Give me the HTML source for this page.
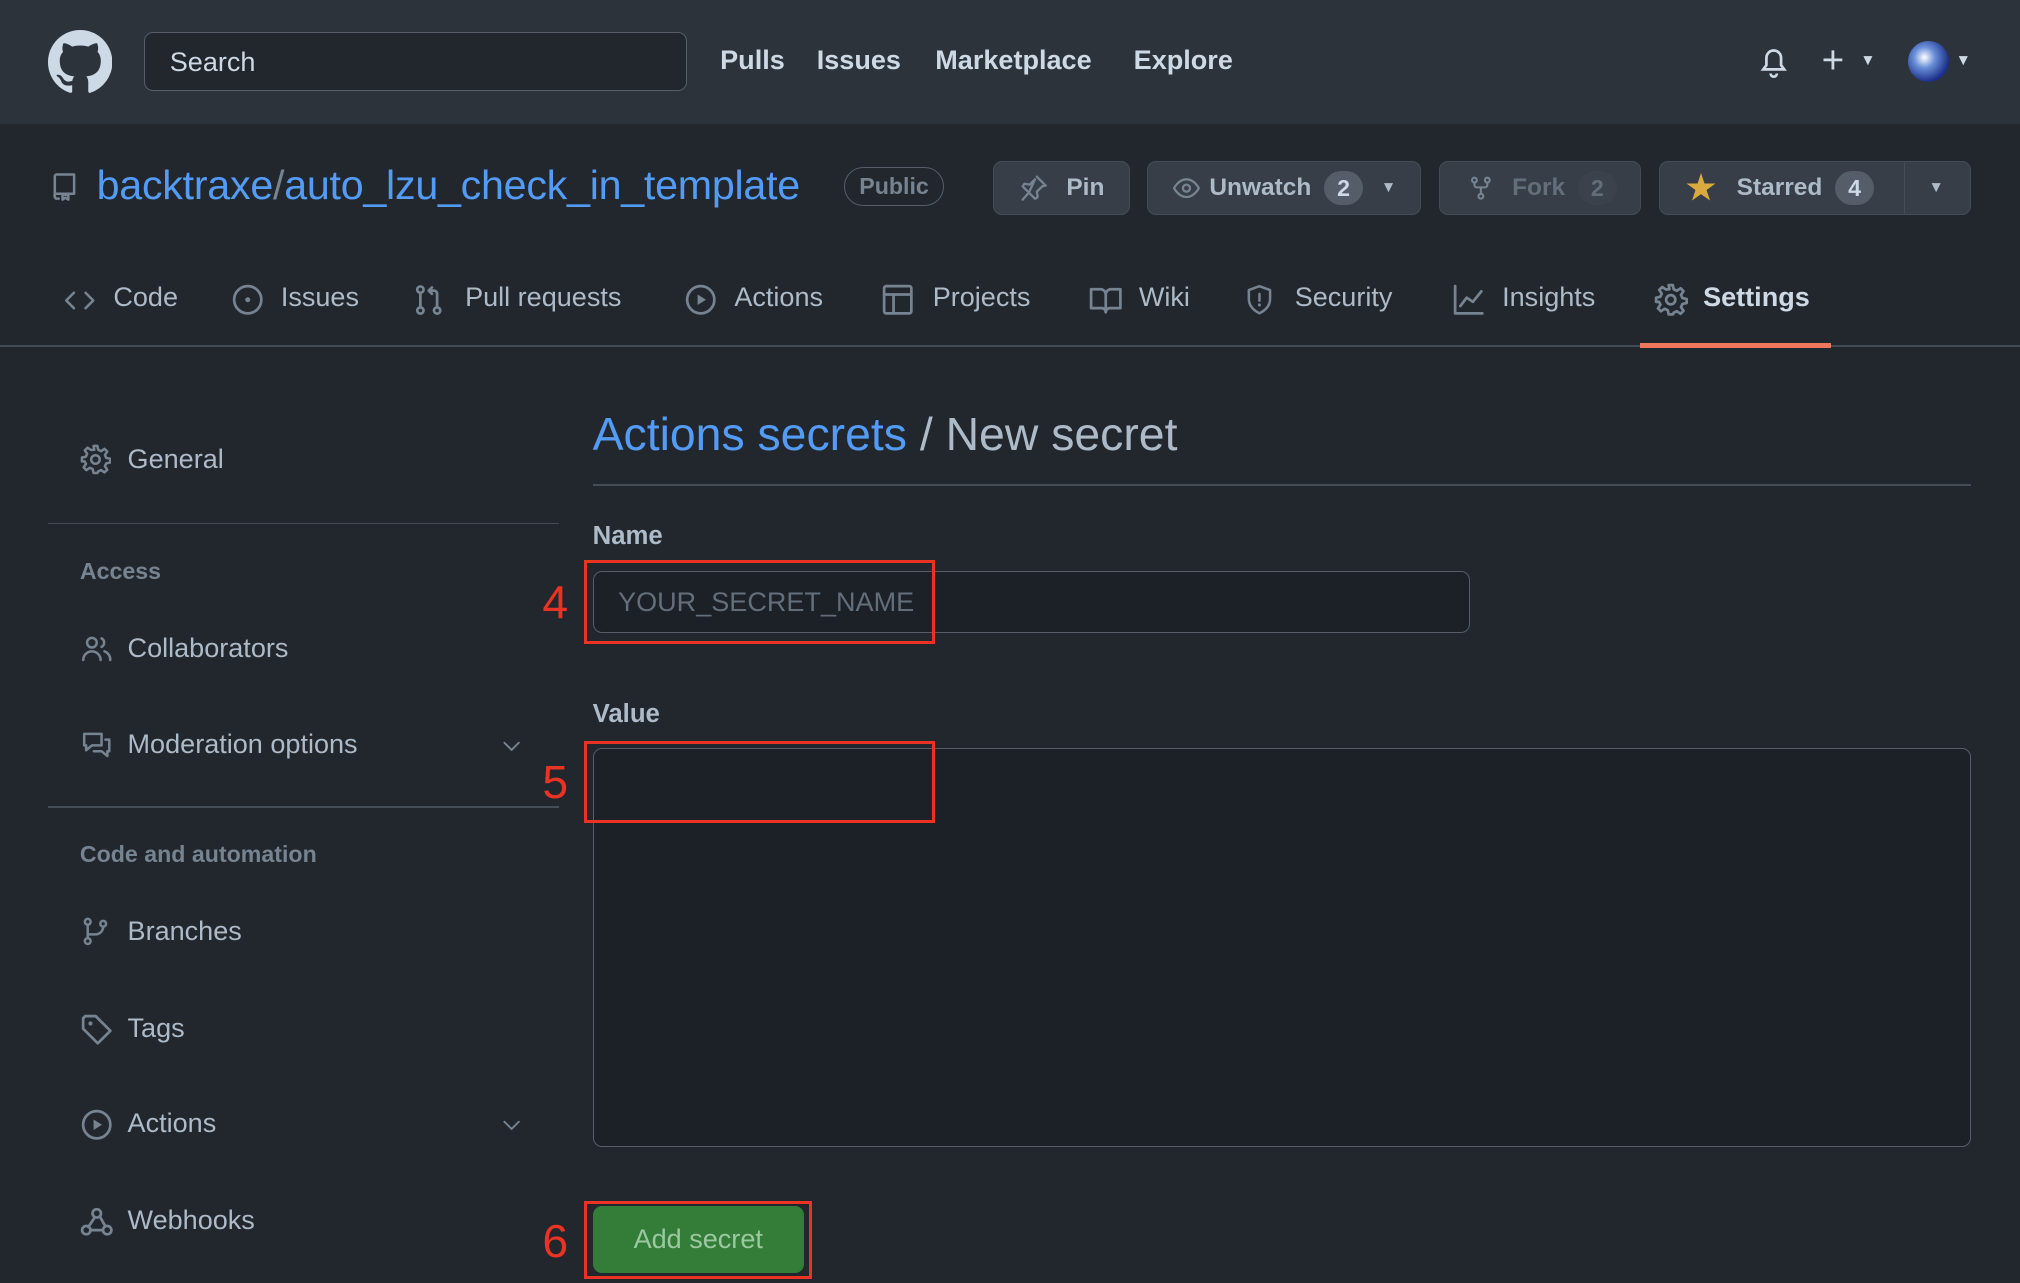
<!DOCTYPE html>
<html><head><meta charset="utf-8"><style>
*{box-sizing:border-box;margin:0;padding:0}
html,body{width:2020px;height:1283px;overflow:hidden;background:#22272e}
#w{zoom:1.28827;width:1568px;height:996px;position:relative;font-family:"Liberation Sans",sans-serif;color:#adbac7;background:#22272e}
.a{position:absolute;white-space:nowrap}
.hdr{left:0;top:0;width:1568px;height:96px;background:#2d333b}
.nav{font-weight:bold;font-size:21px;color:#cdd9e5;top:35px}
.btn{position:absolute;top:125px;height:42px;border:1px solid #444c56;background:#373e47;border-radius:7px;font-size:19px;font-weight:bold;color:#adbac7;display:flex;align-items:center}
.cnt{display:inline-block;background:#545d68;border-radius:14px;padding:3px 10px;margin-left:10px;font-size:18px;color:#cdd9e5}
.tab{top:219px;font-size:21px;color:#adbac7}
.side{font-size:21px;color:#adbac7;left:99px}
.sh{font-size:18px;font-weight:bold;color:#768390;left:62px}
.red{position:absolute;border:3px solid #ea3323}
.num{position:absolute;color:#ea3323;font-size:36px;left:421px}
svg{position:absolute}
.ic{fill:none;stroke:#768390;stroke-width:1.3;stroke-linecap:round;stroke-linejoin:round}
</style></head><body><div id="w">
<div class="a hdr"></div>
<svg style="left:37px;top:23px" width="50" height="50" viewBox="0 0 16 16"><path fill="#cdd9e5" d="M8 0C3.58 0 0 3.58 0 8c0 3.540 2.29 6.530 5.47 7.590.4.07.55-.17.55-.38 0-.19-.01-.82-.01-1.490-2.010.37-2.530-.49-2.690-.94-.09-.23-.48-.94-.82-1.130-.28-.15-.68-.52-.01-.53.63-.01 1.080.58 1.230.82.72 1.210 1.870.87 2.330.66.07-.52.28-.87.51-1.070-1.780-.2-3.640-.89-3.640-3.950 0-.87.31-1.590.82-2.150-.08-.2-.36-1.020.08-2.120 0 0 .67-.21 2.200.82.64-.18 1.320-.27 2-.27.68 0 1.360.09 2 .27 1.530-1.040 2.200-.82 2.200-.82.44 1.100.16 1.920.08 2.120.51.56.82 1.270.82 2.150 0 3.070-1.870 3.750-3.650 3.950.29.25.54.73.54 1.480 0 1.070-.01 1.930-.01 2.200 0 .21.15.46.55.38A8.013 8.013 0 0016 8c0-4.420-3.580-8-8-8z"/></svg>
<div class="a" style="left:112px;top:25px;width:421px;height:46px;border:1px solid #545d68;border-radius:7px;background:#22272e;font-size:21px;color:#cdd9e5;padding:11px 19px">Search</div>
<div class="a nav" style="left:559px">Pulls</div>
<div class="a nav" style="left:634px">Issues</div>
<div class="a nav" style="left:726px">Marketplace</div>
<div class="a nav" style="left:880px">Explore</div>
<svg style="left:1364px;top:34px" width="26" height="28" viewBox="0 0 16 16"><path fill="none" stroke="#cdd9e5" stroke-width="1.3" d="M3 11.5h10l-1.5-2V6a3.5 3.5 0 00-7 0v3.5zM6.5 13.5a1.5 1.5 0 003 0"/></svg>
<div class="a" style="left:1414px;top:30px;font-size:30px;color:#cdd9e5">+</div>
<div class="a" style="left:1444px;top:40px;font-size:12px;color:#cdd9e5">▼</div>
<div class="a" style="left:1481px;top:32px;width:32px;height:32px;border-radius:50%;background:radial-gradient(circle at 40% 40%,#fff 0,#6a8fd8 30%,#1b2f8a 70%)"></div>
<div class="a" style="left:1518px;top:40px;font-size:12px;color:#cdd9e5">▼</div>

<svg style="left:38px;top:131px" width="24" height="28" viewBox="0 0 16 16"><path class="ic" d="M3 13V2.5A1 1 0 014 1.5h9v10H4a1 1 0 00-1 1.5 1 1 0 001 1h1M7 14.5V12h3v2.5l-1.5-1z"/></svg>
<div class="a" style="left:75px;top:126px;font-size:32px;color:#539bf5;letter-spacing:-0.2px">backtraxe<span style="color:#768390">/</span>auto_lzu_check_in_template</div>
<div class="a" style="left:655px;top:130px;width:78px;height:30px;border:1px solid #545d68;border-radius:15px;font-size:18px;color:#768390;text-align:center;line-height:28px;font-weight:bold">Public</div>
<div class="btn" style="left:771px;width:106px;padding-left:20px"><svg style="position:static;margin-right:14px" width="22" height="22" viewBox="0 0 16 16"><path class="ic" d="M9.5 1.5l5 5-2 .5-3 3 .5 3-1.5 1L5 10.5l-3.5 4M5 10.5L1.5 7l1-1.5 3 .5 3-3z"/></svg>Pin</div>
<div class="btn" style="left:890px;width:213px;padding-left:18px"><svg style="position:static;margin-right:6px" width="24" height="22" viewBox="0 0 16 16"><path class="ic" d="M1 8s2.5-5 7-5 7 5 7 5-2.5 5-7 5-7-5-7-5z"/><circle class="ic" cx="8" cy="8" r="2"/></svg>Unwatch<span class="cnt">2</span><span style="font-size:12px;margin-left:14px">▼</span></div>
<div class="btn" style="left:1117px;width:157px;padding-left:22px;color:#636e7b"><svg style="position:static;margin-right:14px" width="20" height="22" viewBox="0 0 16 16"><circle class="ic" cx="4" cy="3" r="1.5"/><circle class="ic" cx="12" cy="3" r="1.5"/><circle class="ic" cx="8" cy="13" r="1.5"/><path class="ic" d="M4 4.5v1.5a1.5 1.5 0 001.5 1.5h5a1.5 1.5 0 001.5-1.5V4.5M8 7.5v4"/></svg>Fork<span class="cnt" style="background:#3b424b;color:#636e7b">2</span></div>
<div class="btn" style="left:1288px;width:242px;padding-left:20px"><span style="color:#daaa3f;font-size:26px;margin-right:16px">★</span>Starred<span class="cnt">4</span></div>
<div class="a" style="left:1478px;top:126px;width:1px;height:40px;background:#444c56"></div>
<div class="a" style="left:1497px;top:139px;font-size:12px;color:#adbac7">▼</div>

<svg style="left:49px;top:221px" width="26" height="24" viewBox="0 0 16 16"><path class="ic" d="M5 4L1 8l4 4M11 4l4 4-4 4"/></svg><div class="a tab" style="left:88px">Code</div>
<svg style="left:179px;top:220px" width="26" height="26" viewBox="0 0 16 16"><circle class="ic" cx="8" cy="8" r="6.5"/><circle cx="8" cy="8" r="1.2" fill="#768390"/></svg><div class="a tab" style="left:218px">Issues</div>
<svg style="left:320px;top:219px" width="26" height="28" viewBox="0 0 16 16"><circle class="ic" cx="4" cy="3" r="1.5"/><circle class="ic" cx="4" cy="13" r="1.5"/><circle class="ic" cx="12" cy="13" r="1.5"/><path class="ic" d="M4 4.5v7M12 11.5V5a1.5 1.5 0 00-1.5-1.5H8M9.5 2L8 3.5 9.5 5"/></svg><div class="a tab" style="left:361px">Pull requests</div>
<svg style="left:531px;top:220px" width="26" height="26" viewBox="0 0 16 16"><circle class="ic" cx="8" cy="8" r="6.5"/><path d="M6.5 5.5v5l4-2.5z" fill="#768390"/></svg><div class="a tab" style="left:570px">Actions</div>
<svg style="left:684px;top:220px" width="26" height="26" viewBox="0 0 16 16"><rect class="ic" x="1.5" y="1.5" width="13" height="13" rx="1"/><path class="ic" d="M1.5 5.5h13M6 5.5v9"/></svg><div class="a tab" style="left:724px">Projects</div>
<svg style="left:845px;top:220px" width="26" height="26" viewBox="0 0 16 16"><path class="ic" d="M1 3h4.5A2.5 2.5 0 018 5.5V14a2 2 0 00-2-2H1zM15 3h-4.5A2.5 2.5 0 008 5.5V14a2 2 0 012-2h5z"/></svg><div class="a tab" style="left:884px">Wiki</div>
<svg style="left:966px;top:220px" width="24" height="26" viewBox="0 0 16 16"><path class="ic" d="M8 1L2.5 3v4.5c0 3.5 2.5 6 5.5 7.5 3-1.5 5.5-4 5.5-7.5V3z"/><path class="ic" d="M8 5v3.5"/><circle cx="8" cy="10.7" r=".8" fill="#768390"/></svg><div class="a tab" style="left:1005px">Security</div>
<svg style="left:1127px;top:220px" width="26" height="26" viewBox="0 0 16 16"><path class="ic" d="M1.5 1.5v13h13M4 11l3-4 3 2 4-5"/></svg><div class="a tab" style="left:1166px">Insights</div>
<svg style="left:1284px;top:220px" width="26" height="26" viewBox="0 0 16 16"><circle class="ic" cx="8" cy="8" r="2.2"/><path class="ic" d="M7 1h2l.4 2 1.5.7 1.8-1.2 1.4 1.4-1.2 1.8.7 1.5 2 .4v2l-2 .4-.7 1.5 1.2 1.8-1.4 1.4-1.8-1.2-1.5.7L9 15H7l-.4-2-1.5-.7-1.8 1.2-1.4-1.4 1.2-1.8L2.4 9 1 9V7l2-.4.7-1.5-1.2-1.8 1.4-1.4 1.8 1.2L7.4 3z"/></svg><div class="a tab" style="left:1322px;font-weight:bold;color:#cdd9e5">Settings</div>
<div class="a" style="left:0;top:268px;width:1568px;height:1px;background:#444c56"></div>
<div class="a" style="left:1273px;top:266px;width:148px;height:4px;background:#ec775c"></div>

<svg style="left:62px;top:345px" width="24" height="24" viewBox="0 0 16 16"><circle class="ic" cx="8" cy="8" r="2.2"/><path class="ic" d="M7 1h2l.4 2 1.5.7 1.8-1.2 1.4 1.4-1.2 1.8.7 1.5 2 .4v2l-2 .4-.7 1.5 1.2 1.8-1.4 1.4-1.8-1.2-1.5.7L9 15H7l-.4-2-1.5-.7-1.8 1.2-1.4-1.4 1.2-1.8L2.4 9 1 9V7l2-.4.7-1.5-1.2-1.8 1.4-1.4 1.8 1.2L7.4 3z"/></svg><div class="a side" style="top:345px">General</div>
<div class="a" style="left:37px;top:406px;width:397px;height:1px;background:#444c56"></div>
<div class="a sh" style="top:433px">Access</div>
<svg style="left:62px;top:491px" width="26" height="24" viewBox="0 0 16 16"><circle class="ic" cx="5.5" cy="5" r="2.5"/><path class="ic" d="M1 14a4.5 4.5 0 019 0M10.5 2.8a2.5 2.5 0 010 4.4M12 9.5a4.5 4.5 0 013 4.5"/></svg><div class="a side" style="top:491px">Collaborators</div>
<svg style="left:62px;top:566px" width="26" height="24" viewBox="0 0 16 16"><path class="ic" d="M1.5 2.5h9v6h-5l-3 2.5v-2.5h-1zM12.5 5.5h2v6h-1v2.5l-3-2.5h-4"/></svg><div class="a side" style="top:566px">Moderation options</div>
<svg style="left:388px;top:570px" width="18" height="18" viewBox="0 0 16 16"><path class="ic" d="M3 6l5 5 5-5"/></svg>
<div class="a" style="left:37px;top:626px;width:397px;height:1px;background:#444c56"></div>
<div class="a sh" style="top:653px">Code and automation</div>
<svg style="left:62px;top:711px" width="24" height="24" viewBox="0 0 16 16"><circle class="ic" cx="4" cy="3" r="1.5"/><circle class="ic" cx="4" cy="13" r="1.5"/><circle class="ic" cx="12" cy="4" r="1.5"/><path class="ic" d="M4 4.5v7M12 5.5A4 4 0 018 9.5H4"/></svg><div class="a side" style="top:711px">Branches</div>
<svg style="left:62px;top:786px" width="26" height="26" viewBox="0 0 16 16"><path class="ic" d="M1.5 2.5v5l7 7 6-6-7-7h-5z"/><circle cx="5" cy="5" r="1" fill="#768390"/></svg><div class="a side" style="top:786px">Tags</div>
<svg style="left:62px;top:860px" width="26" height="26" viewBox="0 0 16 16"><circle class="ic" cx="8" cy="8" r="6.5"/><path d="M6.5 5.5v5l4-2.5z" fill="#768390"/></svg><div class="a side" style="top:860px">Actions</div>
<svg style="left:388px;top:864px" width="18" height="18" viewBox="0 0 16 16"><path class="ic" d="M3 6l5 5 5-5"/></svg>
<svg style="left:62px;top:935px" width="26" height="26" viewBox="0 0 16 16"><circle class="ic" cx="8" cy="4" r="2"/><circle class="ic" cx="3" cy="12" r="2"/><circle class="ic" cx="13" cy="12" r="2"/><path class="ic" d="M7 6l-3 4.5M9.5 5.5l2.5 4.5M5 12h6"/></svg><div class="a side" style="top:935px">Webhooks</div>

<div class="a" style="left:460px;top:316px;font-size:36px;color:#adbac7"><span style="color:#539bf5">Actions secrets</span> / New secret</div>
<div class="a" style="left:460px;top:376px;width:1070px;height:1px;background:#444c56"></div>
<div class="a" style="left:460px;top:405px;font-size:20px;font-weight:bold">Name</div>
<div class="a" style="left:460px;top:443px;width:681px;height:48px;border:1px solid #545d68;border-radius:7px;background:#1c2128;font-size:21px;color:#636e7b;padding:12px 19px">YOUR_SECRET_NAME</div>
<div class="a" style="left:460px;top:543px;font-size:20px;font-weight:bold">Value</div>
<div class="a" style="left:460px;top:581px;width:1070px;height:309px;border:1px solid #545d68;border-radius:7px;background:#1c2128"></div>
<div class="a" style="left:460px;top:936px;width:164px;height:52px;border-radius:7px;background:#347d39;font-size:21px;text-align:center;line-height:52px;color:#9cc8a0">Add secret</div>

<div class="red" style="left:453px;top:435px;width:273px;height:65px"></div>
<div class="red" style="left:453px;top:575px;width:273px;height:64px"></div>
<div class="red" style="left:453px;top:932px;width:177px;height:61px"></div>
<div class="num" style="top:446px">4</div>
<div class="num" style="top:586px">5</div>
<div class="num" style="top:942px">6</div>
</div></body></html>
